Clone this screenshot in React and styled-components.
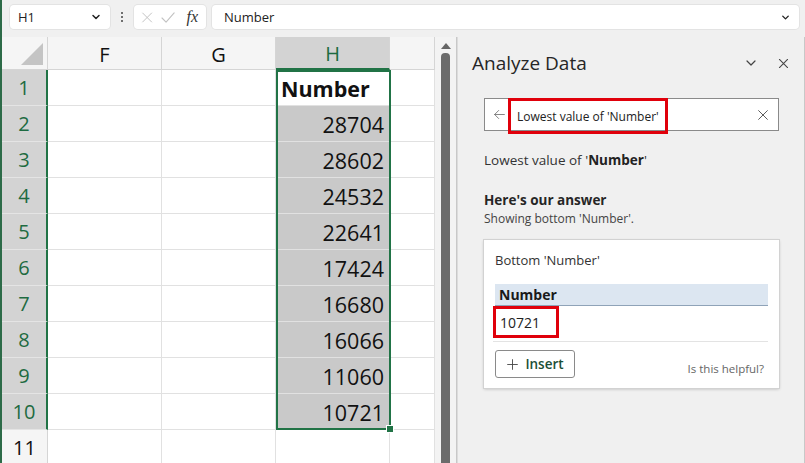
import React from "react";
import styled, { createGlobalStyle } from "styled-components";

const GlobalStyle = createGlobalStyle`
  html, body { margin: 0; padding: 0; }
  body {
    width: 805px;
    height: 463px;
    overflow: hidden;
    background: #f0f0f0;
    font-family: "Open Sans", "Noto Sans", sans-serif;
  }
`;

const Shell = styled.div`
  width: 805px;
  height: 463px;
  display: flex;
  flex-direction: column;
  background: #f0f0f0;
  border-left: 2px solid #2d6b48;
  box-sizing: border-box;
`;

const FormulaBar = styled.div`
  height: 37px;
  display: flex;
  align-items: flex-start;
  padding: 5px 6px 0 8px;
  box-sizing: border-box;
  gap: 6px;
`;

const WhiteBox = styled.div`
  height: 24px;
  background: #fff;
  border-radius: 4px;
  box-shadow: 0 0 0 1px #e3e3e3;
  display: flex;
  align-items: center;
  box-sizing: border-box;
  font-size: 13px;
  color: #222;
  width: ${(p) => p.$w || "auto"};
  flex: ${(p) => (p.$grow ? 1 : "none")};
  padding: 0 8px 0 ${(p) => p.$pl || "8px"};
  gap: ${(p) => p.$gap || "0"};
`;

const Spacer = styled.div`
  flex: 1;
`;

const Dots = styled.div`
  width: 12px;
  height: 24px;
  display: flex;
  flex-direction: column;
  align-items: center;
  justify-content: center;
  gap: 2px;
  span {
    width: 2px;
    height: 2px;
    background: #444;
    border-radius: 1px;
  }
`;

const Fx = styled.span`
  font-family: "Liberation Serif", serif;
  font-style: italic;
  font-size: 16px;
  color: #333;
  margin-left: 4px;
`;

const Main = styled.div`
  flex: 1;
  display: flex;
  min-height: 0;
`;

const SheetArea = styled.div`
  width: 433px;
  background: #fff;
  position: relative;
  overflow: hidden;
`;

const Grid = styled.div`
  display: grid;
  grid-template-columns: 46px 114px 114px 114px 45px;
  grid-template-rows: 33px repeat(11, 36px);
`;

const Corner = styled.div`
  background: #f5f5f5;
  border-right: 1px solid #d5d5d5;
  border-bottom: 1px solid #d5d5d5;
  position: relative;
  &::after {
    content: "";
    position: absolute;
    right: 4px;
    bottom: 4px;
    width: 0;
    height: 0;
    border-left: 22px solid transparent;
    border-bottom: 22px solid #c4c4c4;
  }
`;

const ColHead = styled.div`
  background: ${(p) => (p.$active ? "#d3d3d3" : "#f5f5f5")};
  color: ${(p) => (p.$active ? "#1e6b41" : "#111")};
  border-right: 1px solid #d5d5d5;
  border-bottom: ${(p) => (p.$active ? "2px solid #217346" : "1px solid #d5d5d5")};
  font-size: 20px;
  display: flex;
  align-items: center;
  justify-content: center;
  padding-top: 2px;
  box-sizing: border-box;
`;

const RowHead = styled.div`
  background: ${(p) => (p.$active ? "#d3d3d3" : "#f5f5f5")};
  color: ${(p) => (p.$active ? "#1e6b41" : "#111")};
  border-right: ${(p) => (p.$active ? "2px solid #217346" : "1px solid #d5d5d5")};
  border-bottom: 1px solid #e4e4e4;
  font-size: 20px;
  display: flex;
  align-items: center;
  justify-content: center;
  box-sizing: border-box;
`;

const Cell = styled.div`
  border-right: 1px solid #e1e1e1;
  border-bottom: 1px solid #e1e1e1;
  box-sizing: border-box;
  background: ${(p) => (p.$sel ? "#c9c9c9" : "#fff")};
  font-size: 21.5px;
  font-weight: ${(p) => (p.$bold ? 700 : 400)};
  color: #111;
  display: flex;
  align-items: center;
  justify-content: ${(p) => (p.$bold ? "flex-start" : "flex-end")};
  padding: 1px 5px 0 5px;
`;

const Selection = styled.div`
  position: absolute;
  left: 274px;
  top: 33px;
  width: 115px;
  height: 360px;
  border: 2px solid #217346;
  box-sizing: border-box;
  pointer-events: none;
  &::after {
    content: "";
    position: absolute;
    right: -5px;
    bottom: -5px;
    width: 6px;
    height: 6px;
    background: #217346;
    border: 1px solid #fff;
  }
`;

const Gutter = styled.div`
  width: 22px;
  background: #f3f3f3;
  border-right: 1px solid #c8c8c8;
  display: flex;
  flex-direction: column;
  align-items: center;
  padding-top: 6px;
  box-sizing: border-box;
  gap: 4px;
`;

const UpArrow = styled.div`
  width: 0;
  height: 0;
  border-left: 5px solid transparent;
  border-right: 5px solid transparent;
  border-bottom: 6px solid #666;
`;

const Thumb = styled.div`
  width: 9px;
  flex: 1;
  background: #6b6b6b;
  border-radius: 4px 4px 0 0;
`;

const Pane = styled.div`
  flex: 1;
  background: #f0f0f0;
  border-left: 1px solid #dcdcdc;
  border-right: 1px solid #c8c8c8;
  padding: 12px 14px 0 14px;
  box-sizing: border-box;
  display: flex;
  flex-direction: column;
`;

const PaneHeader = styled.div`
  display: flex;
  align-items: center;
  height: 28px;
  gap: 18px;
`;

const PaneTitle = styled.h2`
  margin: 0;
  font-weight: 400;
  font-size: 19px;
  color: #262626;
  flex: 1;
`;

const Body = styled.div`
  padding: 0 11px 0 12px;
  display: flex;
  flex-direction: column;
`;

const Search = styled.div`
  margin-top: 21px;
  height: 33px;
  background: #fff;
  border: 1px solid #8a8a8a;
  box-sizing: border-box;
  display: flex;
  align-items: center;
  padding: 0 8px 0 8px;
`;

const Highlight = styled.div`
  border: 3px solid #e0000b;
  box-sizing: border-box;
  display: flex;
  align-items: center;
  color: #222;
  width: ${(p) => p.$w};
`;

const QueryHighlight = styled(Highlight)`
  margin-left: 2px;
  margin-top: 3px;
  height: 36px;
  padding: 0 6px;
  font-size: 12px;
`;

const ValueHighlight = styled(Highlight)`
  height: 32px;
  padding: 0 4px;
  font-size: 14px;
`;

const Query = styled.div`
  margin-top: 20px;
  font-size: 13.5px;
  color: #333;
  b {
    color: #222;
  }
`;

const AnswerTitle = styled.div`
  margin-top: 22px;
  font-size: 13.5px;
  font-weight: 700;
  color: #262626;
`;

const AnswerSub = styled.div`
  font-size: 12px;
  color: #444;
  margin-top: 1px;
`;

const Card = styled.div`
  margin-top: 13px;
  background: #fff;
  box-shadow: 0 0 0 1px #d2d2d2, 0 1px 3px rgba(0, 0, 0, 0.25);
  padding: 11px 11px 10px 11px;
  display: flex;
  flex-direction: column;
`;

const CardTitle = styled.div`
  font-size: 13px;
  color: #333;
`;

const TableHead = styled.div`
  margin-top: 15px;
  background: #dce6f1;
  border-bottom: 1px solid #8fa3b8;
  font-weight: 700;
  font-size: 14px;
  color: #1a1a1a;
  padding: 1px 4px;
`;

const ValueRow = styled.div`
  height: 35px;
  border-bottom: 1px solid #e3e3e3;
  display: flex;
  align-items: flex-start;
  margin-left: -2px;
`;

const CardFooter = styled.div`
  display: flex;
  align-items: center;
  justify-content: space-between;
  margin-top: 8px;
`;

const InsertBtn = styled.button`
  height: 28px;
  width: 80px;
  border: 1px solid #8a8a8a;
  border-radius: 3px;
  background: #fff;
  display: flex;
  align-items: center;
  justify-content: center;
  gap: 6px;
  font-family: inherit;
  font-size: 13.5px;
  font-weight: 600;
  color: #1b4f36;
  padding: 0;
`;

const Helpful = styled.span`
  font-size: 11.5px;
  color: #666;
  margin-top: 8px;
  margin-right: 4px;
`;

const Icon = ({ d, size = 14, color = "#555", w = 1.3 }) => (
  <svg width={size} height={size} viewBox="0 0 16 16" fill="none" stroke={color} strokeWidth={w} strokeLinecap="round" strokeLinejoin="round">
    <path d={d} />
  </svg>
);

const chevron = "M4 6 L8 10 L12 6";
const cross = "M3 3 L13 13 M13 3 L3 13";
const check = "M2 8.5 L6 12.5 L14 3.5";
const arrowLeft = "M14 8 H2 M7 3 L2 8 L7 13";
const plus = "M8 2 V14 M2 8 H14";

const numbers = [28704, 28602, 24532, 22641, 17424, 16680, 16066, 11060, 10721];

export default function App() {
  const rows = Array.from({ length: 11 }, (_, i) => i + 1);
  return (
    <>
      <GlobalStyle />
      <Shell>
        <FormulaBar>
          <WhiteBox $w="100px">
            H1
            <Spacer />
            <Icon d={chevron} size={12} color="#222" w={2} />
          </WhiteBox>
          <Dots>
            <span />
            <span />
            <span />
          </Dots>
          <WhiteBox $w="72px" $gap="6px" $pl="6px">
            <Icon d={cross} size={15} color="#c2c2c2" w={1.1} />
            <Icon d={check} size={17} color="#c2c2c2" w={1.1} />
            <Fx>fx</Fx>
          </WhiteBox>
          <WhiteBox $grow $pl="12px">
            Number
            <Spacer />
            <Icon d={chevron} size={11} color="#222" w={2} />
          </WhiteBox>
        </FormulaBar>
        <Main>
          <SheetArea>
            <Grid>
              <Corner />
              <ColHead>F</ColHead>
              <ColHead>G</ColHead>
              <ColHead $active>H</ColHead>
              <ColHead />
              {rows.map((r) => (
                <React.Fragment key={r}>
                  <RowHead $active={r <= 10}>{r}</RowHead>
                  <Cell />
                  <Cell />
                  <Cell $sel={r >= 2 && r <= 10} $bold={r === 1}>
                    {r === 1 ? "Number" : r <= 10 ? numbers[r - 2] : ""}
                  </Cell>
                  <Cell />
                </React.Fragment>
              ))}
            </Grid>
            <Selection />
          </SheetArea>
          <Gutter>
            <UpArrow />
            <Thumb />
          </Gutter>
          <Pane>
            <PaneHeader>
              <PaneTitle>Analyze Data</PaneTitle>
              <Icon d={chevron} size={16} color="#444" w={1.2} />
              <Icon d={cross} size={13} color="#444" w={1.3} />
            </PaneHeader>
            <Body>
              <Search>
                <Icon d={arrowLeft} size={13} color="#777" w={1.1} />
                <QueryHighlight $w="160px">Lowest value of 'Number'</QueryHighlight>
                <Spacer />
                <Icon d={cross} size={14} color="#555" w={1.1} />
              </Search>
              <Query>
                Lowest value of '<b>Number</b>'
              </Query>
              <AnswerTitle>Here's our answer</AnswerTitle>
              <AnswerSub>Showing bottom 'Number'.</AnswerSub>
              <Card>
                <CardTitle>Bottom 'Number'</CardTitle>
                <TableHead>Number</TableHead>
                <ValueRow>
                  <ValueHighlight $w="66px">10721</ValueHighlight>
                </ValueRow>
                <CardFooter>
                  <InsertBtn>
                    <Icon d={plus} size={13} color="#444" w={1.1} />
                    Insert
                  </InsertBtn>
                  <Helpful>Is this helpful?</Helpful>
                </CardFooter>
              </Card>
            </Body>
          </Pane>
        </Main>
      </Shell>
    </>
  );
}
